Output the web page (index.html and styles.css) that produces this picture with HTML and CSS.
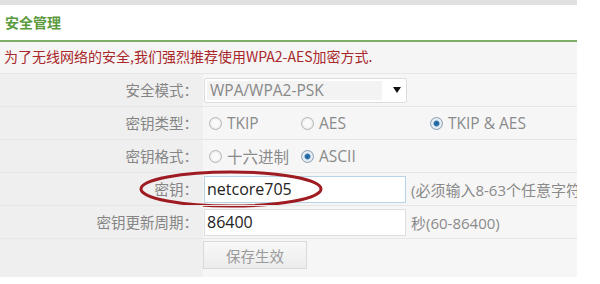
FILE: index.html
```html
<!DOCTYPE html>
<html lang="zh-CN">

<head>
  <meta charset="UTF-8">
  <title>安全管理</title>
  <link rel="stylesheet" href="styles.css">
</head>

<body>
  <div class="page">
    <div class="topbar"></div>
    <div class="title">安全管理</div>
    <div class="notice">为了无线网络的安全,我们强烈推荐使用WPA2-AES加密方式.</div>

    <div class="form">
      <div class="row">
        <div class="label">安全模式：</div>
        <div class="value">
          <div class="select">
            <span class="select-text">WPA/WPA2-PSK</span>
            <span class="select-arrow"></span>
          </div>
        </div>
      </div>
      <div class="row">
        <div class="label">密钥类型：</div>
        <div class="value">
          <span class="radio-item w-tkip"><span class="radio"></span>TKIP</span>
          <span class="radio-item w-aes"><span class="radio"></span>AES</span>
          <span class="radio-item"><span class="radio checked"></span>TKIP &amp; AES</span>
        </div>
      </div>
      <div class="row">
        <div class="label">密钥格式：</div>
        <div class="value">
          <span class="radio-item w-tkip"><span class="radio"></span>十六进制</span>
          <span class="radio-item"><span class="radio checked"></span>ASCII</span>
        </div>
      </div>
      <div class="row key-row">
        <div class="label">密钥：</div>
        <div class="value">
          <div class="input focus">netcore705</div>
          <span class="hint">(必须输入8-63个任意字符)</span>
        </div>
        <!-- red annotation ring -->
        <svg class="ring" width="200" height="44" viewBox="0 0 200 44">
          <ellipse cx="100" cy="22" rx="90" ry="17" fill="none" stroke="#9e1b22" stroke-width="3" />
        </svg>
      </div>
      <div class="row">
        <div class="label">密钥更新周期：</div>
        <div class="value">
          <div class="input">86400</div>
          <span class="hint">秒(60-86400)</span>
        </div>
      </div>
      <div class="row last">
        <div class="label"></div>
        <div class="value">
          <button class="save-btn">保存生效</button>
        </div>
      </div>
    </div>
  </div>
</body>

</html>
```

FILE: styles.css
```css
body {
  margin: 0;
  background-color: #fff;
  font-family: "Noto Sans CJK SC", "Open Sans", sans-serif;
  font-size: 14.5px;
}

.page {
  width: 577px;
}

.topbar {
  height: 5px;
  background-color: #e0e0e0;
}

.title {
  height: 35px;
  line-height: 34px;
  padding-left: 5px;
  color: #5b9a3d;
  font-weight: bold;
  font-size: 14px;
  border-bottom: 2px solid #7fae68;
}

.notice {
  height: 31px;
  line-height: 28px;
  padding-left: 4px;
  background-color: #f5f5f5;
  color: #a8282b;
  font-size: 14px;
  white-space: nowrap;
}

.form {
  background-color: #f6f6f6;
}

.row {
  position: relative;
  display: flex;
  height: 32px;
  border-top: 1px solid #e6e6e6;
}

.row.last {
  height: 38px;
}

.label {
  flex-shrink: 0;
  width: 198px;
  padding-right: 5px;
  text-align: right;
  line-height: 32px;
  color: #858585;
  background-color: #efefef;
}

.value {
  flex: 1;
  min-width: 0;
  display: flex;
  align-items: center;
  overflow: hidden;
  white-space: nowrap;
  color: #777;
}

.select {
  flex-shrink: 0;
  display: flex;
  align-items: center;
  width: 201px;
  height: 23px;
  margin-left: 1px;
  background-color: #fff;
  border: 1px solid #dcdcdc;
  border-radius: 2px;
}

.select-text {
  width: 172px;
  height: 19px;
  margin-left: 2px;
  padding-left: 3px;
  line-height: 19px;
  background-color: #f3f3f3;
  color: #888;
  font-family: "Open Sans", sans-serif;
  font-size: 15.5px;
}

.select-arrow {
  margin-left: 11px;
  width: 0;
  height: 0;
  border-left: 4px solid transparent;
  border-right: 4px solid transparent;
  border-top: 6px solid #111;
}

.radio-item {
  flex-shrink: 0;
  display: flex;
  align-items: center;
  color: #8a8a8a;
  font-family: "Open Sans", "Noto Sans CJK SC", sans-serif;
  font-size: 15.5px;
}

.w-tkip {
  width: 92px;
}

.w-aes {
  width: 129px;
}

.radio {
  display: inline-block;
  box-sizing: border-box;
  width: 13px;
  height: 13px;
  margin: 0 5px 0 6px;
  border-radius: 50%;
  border: 1px solid #b5b5b5;
  background: radial-gradient(circle, #fafafa 40%, #dcdcdc 100%);
}

.radio.checked {
  border-color: #8aa0b5;
  background: radial-gradient(circle, #1d5d96 0, #2f74b0 30%, #e8eef4 45%, #d6dde4 100%);
}

.input {
  flex-shrink: 0;
  box-sizing: border-box;
  width: 202px;
  height: 27px;
  margin-left: 1px;
  padding-left: 2px;
  line-height: 25px;
  background-color: #fff;
  border: 1px solid #dedede;
  color: #222;
  font-family: "Open Sans", sans-serif;
  font-size: 16px;
}

.input.focus {
  border-color: #b9d3e6;
}

.hint {
  flex-shrink: 0;
  margin-left: 5px;
  color: #8a8a8a;
  font-family: "Open Sans", "Noto Sans CJK SC", sans-serif;
  font-size: 15px;
}

.save-btn {
  width: 104px;
  height: 28px;
  margin-top: 2px;
  padding: 0;
  border: 1px solid #d9d9d9;
  background: linear-gradient(#f8f8f8, #ececec);
  color: #9a9a9a;
  font-family: "Noto Sans CJK SC", sans-serif;
  font-size: 14.5px;
  align-self: flex-start;
}

.ring {
  position: absolute;
  left: 131px;
  top: -6px;
}
```
